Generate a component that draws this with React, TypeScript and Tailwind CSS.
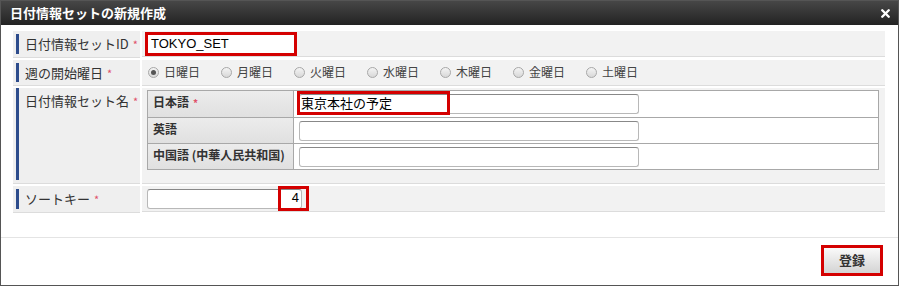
import { X } from 'lucide-react'

const days = ['日曜日', '月曜日', '火曜日', '水曜日', '木曜日', '金曜日', '土曜日']

function Label({ text, tall }: { text: string; tall?: boolean }) {
  return (
    <div className={`flex bg-[#efefef] border-b border-[#dcdcdc] pl-[3px] ${tall ? 'items-start pt-[3px]' : 'items-center py-[3px]'}`}>
      <div className={`w-[3px] self-stretch bg-[#2d4c8c] ${tall ? '-mt-[3px] mb-[3px]' : ''}`} />
      <span className="ml-[6px] text-[13px] text-[#333]">
        {text}
        <span className="ml-[4px] text-[11px] text-[#e0506a]">*</span>
      </span>
    </div>
  )
}

function Radio({ checked }: { checked?: boolean }) {
  return (
    <span className="w-[11px] h-[11px] rounded-full border border-[#a8a8a8] bg-gradient-to-b from-[#f4f4f4] to-[#d8d8d8] flex items-center justify-center">
      {checked && <span className="w-[5px] h-[5px] rounded-full bg-[#555]" />}
    </span>
  )
}

export default function App() {
  return (
    <div className="w-[899px] h-[286px] bg-white border border-[#555] flex flex-col font-['Noto_Sans_CJK_JP','Noto_Sans',sans-serif] text-[#333]">
      {/* title bar */}
      <div className="h-[24px] shrink-0 bg-gradient-to-b from-[#474747] to-[#232323] flex items-center justify-between pl-[9px] pr-[6px]">
        <span className="text-white text-[13px] font-bold">日付情報セットの新規作成</span>
        <X className="w-[13px] h-[13px] text-white" strokeWidth={4.5} />
      </div>

      {/* form */}
      <div className="px-[12px] pt-[6px] grid grid-cols-[127px_743px] gap-x-[2px] gap-y-[2px]">
        <Label text="日付情報セットID" />
        <div className="bg-[#f2f2f2] border-b border-[#dcdcdc] h-[26px] flex items-center pl-[3px]">
          <div className="w-[152px] h-[24px] border-[3px] border-[#d40000] bg-white flex items-center pl-[3px] text-[13px] text-black font-['Liberation_Sans',sans-serif]">
            TOKYO_SET
          </div>
        </div>

        <Label text="週の開始曜日" />
        <div className="bg-[#f2f2f2] border-b border-[#dcdcdc] h-[26px] flex items-center pl-[6px]">
          {days.map((d, i) => (
            <div key={d} className="w-[73px] flex items-center gap-[5px]">
              <Radio checked={i === 0} />
              <span className="text-[12px] text-[#444]">{d}</span>
            </div>
          ))}
        </div>

        <Label text="日付情報セット名" tall />
        <div className="bg-[#f2f2f2] border-b border-[#dcdcdc] h-[96px] pt-[2px] pl-[5px] pr-[6px]">
          <div className="border border-[#a8a8a8] bg-white">
            {[
              { l: '日本語', req: true, v: '東京本社の予定' },
              { l: '英語', v: '' },
              { l: '中国語 (中華人民共和国)', v: '' },
            ].map((r, i) => (
              <div key={r.l} className={`flex h-[26px] ${i > 0 ? 'border-t border-[#a8a8a8]' : ''}`}>
                <div className="w-[146px] bg-gradient-to-b from-[#ececec] to-[#e0e0e0] border-r border-[#a8a8a8] pl-[5px] pt-[2px] text-[12px] font-bold text-[#333]">
                  {r.l}
                  {r.req && <span className="ml-[4px] text-[10px] text-[#e0506a]">*</span>}
                </div>
                <div className="relative flex items-center pl-[5px]">
                  <div className="w-[340px] h-[20px] rounded-[3px] border border-[#b8b8b8] border-t-[#888] bg-white" />
                  {r.v && (
                    <div className="absolute left-[3px] top-0 w-[153px] h-[24px] border-[3px] border-[#d40000] flex items-center pl-[1px] text-[13px] text-black">
                      {r.v}
                    </div>
                  )}
                </div>
              </div>
            ))}
          </div>
        </div>

        <Label text="ソートキー" />
        <div className="bg-[#f2f2f2] border-b border-[#dcdcdc] h-[26px] flex items-center pl-[5px]">
          <div className="relative w-[155px] h-[20px] rounded-[3px] border border-[#b8b8b8] border-t-[#888] bg-white">
            <div className="absolute right-[-8px] top-[-4px] w-[31px] h-[25px] border-[3px] border-[#d40000] flex items-center justify-end pr-[7px] text-[13px] text-black font-['Liberation_Sans',sans-serif]">
              4
            </div>
          </div>
        </div>
      </div>

      {/* footer */}
      <div className="mt-[24px] border-t border-[#e4e4e4] flex justify-end pr-[15px] pt-[7px]">
        <div className="w-[62px] h-[31px] border-[3px] border-[#d40000] bg-gradient-to-b from-[#fafafa] to-[#d4d4d4] flex items-center justify-center text-[13px] font-bold text-[#333]">
          登録
        </div>
      </div>
    </div>
  )
}
